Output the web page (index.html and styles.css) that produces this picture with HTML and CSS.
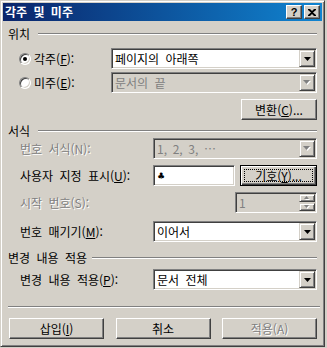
FILE: index.html
```html
<!DOCTYPE html>
<html lang="ko">
<head>
    <meta charset="UTF-8">
    <title>각주 및 미주</title>
    <link rel="stylesheet" href="styles.css">
</head>
<body>

    <div class="window">
        <!-- Title bar -->
        <div class="titlebar">
            <span class="title">각주 및 미주</span>
            <div class="caption-btns">
                <button class="cap-btn help">?</button>
                <button class="cap-btn close">
                    <svg width="8" height="7" viewBox="0 0 8 7"><path d="M0 0h2l2 2 2-2h2v1L5 3.5 8 6v1H6L4 5 2 7H0V6l3-2.5L0 1z" fill="#000"/></svg>
                </button>
            </div>
        </div>

        <div class="content">
            <!-- 위치 -->
            <div class="group"><span>위치</span></div>

            <div class="row radio-row first">
                <span class="radio on"></span>
                <span class="lbl">각주(<u>F</u>):</span>
                <div class="combo long">
                    <span class="val">페이지의 아래쪽</span>
                    <span class="drop"><svg width="7" height="4" viewBox="0 0 7 4"><path d="M0 0h7L3.5 4z" fill="#000"/></svg></span>
                </div>
            </div>

            <div class="row radio-row second">
                <span class="radio"></span>
                <span class="lbl">미주(<u>E</u>):</span>
                <div class="combo long disabled">
                    <span class="val">문서의 끝</span>
                    <span class="drop"><svg width="8" height="5" viewBox="0 0 8 5"><path d="M1 1h7L4.5 5z" fill="#fff"/><path d="M0 0h7L3.5 4z" fill="#808080"/></svg></span>
                </div>
            </div>

            <div class="row right-row">
                <button class="btn convert">변환(<u>C</u>)...</button>
            </div>

            <!-- 서식 -->
            <div class="group g2"><span>서식</span></div>

            <div class="row r-format">
                <span class="lbl dim">번호 서식(N):</span>
                <div class="combo short disabled">
                    <span class="val">1, 2, 3, …</span>
                    <span class="drop"><svg width="8" height="5" viewBox="0 0 8 5"><path d="M1 1h7L4.5 5z" fill="#fff"/><path d="M0 0h7L3.5 4z" fill="#808080"/></svg></span>
                </div>
            </div>

            <div class="row r-custom">
                <span class="lbl">사용자 지정 표시(<u>U</u>):</span>
                <div class="edit mark"><span class="club">♣</span></div>
                <button class="btn default symbol">기호(<u>Y</u>)...</button>
            </div>

            <div class="row r-start">
                <span class="lbl dim">시작 번호(S):</span>
                <div class="edit spin disabled">
                    <span class="val">1</span>
                    <span class="spin-btns">
                        <span class="spin-btn"><svg width="6" height="4" viewBox="0 0 6 4"><path d="M1 4h5L3.5 1.5z" fill="#fff"/><path d="M0 3h5L2.5 0z" fill="#808080"/></svg></span>
                        <span class="spin-btn"><svg width="6" height="4" viewBox="0 0 6 4"><path d="M1 1h5L3.5 4z" fill="#fff"/><path d="M0 0h5L2.5 3z" fill="#808080"/></svg></span>
                    </span>
                </div>
            </div>

            <div class="row r-numbering">
                <span class="lbl">번호 매기기(<u>M</u>):</span>
                <div class="combo short">
                    <span class="val">이어서</span>
                    <span class="drop"><svg width="7" height="4" viewBox="0 0 7 4"><path d="M0 0h7L3.5 4z" fill="#000"/></svg></span>
                </div>
            </div>

            <!-- 변경 내용 적용 -->
            <div class="group g3"><span>변경 내용 적용</span></div>

            <div class="row r-apply">
                <span class="lbl">변경 내용 적용(<u>P</u>):</span>
                <div class="combo short">
                    <span class="val">문서 전체</span>
                    <span class="drop"><svg width="7" height="4" viewBox="0 0 7 4"><path d="M0 0h7L3.5 4z" fill="#000"/></svg></span>
                </div>
            </div>

            <div class="separator"></div>

            <div class="actions">
                <button class="btn action">삽입(<u>I</u>)</button>
                <button class="btn action">취소</button>
                <button class="btn action off">적용(A)</button>
            </div>
        </div>
    </div>

</body>
</html>
```

FILE: styles.css
```css
body {
    margin: 0;
    background-color: #d4d0c8;
    font-family: "Noto Sans CJK KR", "Noto Sans", sans-serif;
    font-size: 12px;
    color: #000;
}

/* Window frame */
.window {
    width: 325px;
    height: 347px;
    box-sizing: border-box;
    padding: 2px;
    border: 1px solid;
    border-color: #d4d0c8 #404040 #404040 #d4d0c8;
    box-shadow: inset 1px 1px #fff, inset -1px -1px #808080;
    background-color: #d4d0c8;
    display: flex;
    flex-direction: column;
}

/* Title bar */
.titlebar {
    height: 18px;
    flex: none;
    display: flex;
    align-items: center;
    justify-content: space-between;
    padding: 0 2px 0 2px;
    background: linear-gradient(to right, #0a246a, #1084d0);
    color: #fff;
}

.title {
    font-weight: bold;
    word-spacing: 3px;
    line-height: 14px;
}

.caption-btns {
    display: flex;
    gap: 2px;
}

.cap-btn {
    width: 16px;
    height: 14px;
    box-sizing: border-box;
    padding: 0;
    border: 1px solid;
    border-color: #fff #404040 #404040 #fff;
    box-shadow: inset -1px -1px #808080, inset 1px 1px #d4d0c8;
    background-color: #d4d0c8;
    display: flex;
    align-items: center;
    justify-content: center;
    font-family: "Liberation Sans", sans-serif;
    font-weight: bold;
    font-size: 11px;
    line-height: 1;
    color: #000;
}

/* Content */
.content {
    flex: 1;
    padding: 0 5px 0 5px;
    display: flex;
    flex-direction: column;
    word-spacing: 3px;
}

.content > * {
    flex: none;
}

u {
    text-decoration: underline;
    text-underline-offset: 1px;
}

/* Group header: etched line behind the label */
.group {
    display: flex;
    align-items: center;
    height: 14px;
    margin-top: 6px;
    background:
        linear-gradient(#808080, #808080) 0 6px / 100% 1px no-repeat,
        linear-gradient(#fff, #fff) 0 7px / 100% 1px no-repeat;
}

.group span {
    white-space: nowrap;
    line-height: 14px;
    padding-right: 8px;
    background-color: #d4d0c8;
}

.group.g2 {
    margin-top: 4px;
}

.group.g3 {
    margin-top: 9px;
}

.group.g3 span {
    padding-right: 5px;
}

.row {
    display: flex;
    align-items: center;
    height: 21px;
    padding-left: 12px;
}

.row .lbl {
    flex: 1;
    white-space: nowrap;
}

.dim {
    color: #808080;
    text-shadow: 1px 1px #fff;
}

/* Radio rows */
.radio-row {
    padding-left: 11px;
}

.radio-row.first {
    margin-top: 7px;
}

.radio-row.second {
    margin-top: 3px;
}

.radio-row .lbl {
    margin-left: 3px;
}

.radio {
    width: 12px;
    height: 12px;
    box-sizing: border-box;
    border-radius: 50%;
    border: 1px solid;
    border-color: #808080 #fff #fff #808080;
    box-shadow: inset 1px 1px #404040, inset -1px -1px #d4d0c8;
    background-color: #fff;
    display: flex;
    align-items: center;
    justify-content: center;
}

.radio.on::after {
    content: "";
    width: 4px;
    height: 4px;
    border-radius: 50%;
    background-color: #000;
}

/* Sunken fields */
.combo,
.edit {
    box-sizing: border-box;
    height: 21px;
    padding: 1px;
    border: 1px solid;
    border-color: #808080 #fff #fff #808080;
    box-shadow: inset 1px 1px #404040, inset -1px -1px #d4d0c8;
    background-color: #fff;
    display: flex;
    align-items: center;
}

.combo.long {
    width: 206px;
}

.combo.short {
    width: 164px;
}

.combo .val,
.edit .val {
    flex: 1;
    padding-left: 2px;
    white-space: nowrap;
}

.disabled {
    background-color: #d4d0c8;
    color: #808080;
}

.drop,
.spin-btn {
    width: 16px;
    height: 17px;
    box-sizing: border-box;
    border: 1px solid;
    border-color: #d4d0c8 #404040 #404040 #d4d0c8;
    box-shadow: inset 1px 1px #fff, inset -1px -1px #808080;
    background-color: #d4d0c8;
    display: flex;
    align-items: center;
    justify-content: center;
}

.edit.mark {
    width: 82px;
    margin-right: 5px;
}

.club {
    font-family: "DejaVu Sans", sans-serif;
    font-size: 9px;
    padding-left: 2px;
}

.edit.spin {
    width: 82px;
}

.spin-btns {
    display: flex;
    flex-direction: column;
}

.spin-btn {
    height: 8px;
    width: 16px;
}

.spin-btn + .spin-btn {
    margin-top: 1px;
}

/* Buttons */
.btn {
    box-sizing: border-box;
    height: 21px;
    padding: 0;
    border: 1px solid;
    border-color: #fff #404040 #404040 #fff;
    box-shadow: inset -1px -1px #808080, inset 1px 1px #d4d0c8;
    background-color: #d4d0c8;
    font: inherit;
    color: #000;
    word-spacing: 3px;
}

.btn.off {
    color: #808080;
    text-shadow: 1px 1px #fff;
}

.btn.default {
    border-color: #000;
    box-shadow: inset 1px 1px #fff, inset -1px -1px #404040, inset -2px -2px #808080;
    outline: 1px dotted #000;
    outline-offset: -5px;
}

.right-row {
    justify-content: flex-end;
    margin-top: 6px;
}

.convert {
    width: 76px;
}

.symbol {
    width: 77px;
}

.r-format {
    margin-top: 0;
}

.r-custom {
    margin-top: 6px;
}

.r-start {
    margin-top: 6px;
}

.r-numbering {
    margin-top: 8px;
}

.r-apply {
    margin-top: 4px;
}

.separator {
    margin: 16px -3px 0 0;
    border-top: 1px solid #808080;
    border-bottom: 1px solid #fff;
}

.actions {
    display: flex;
    justify-content: space-between;
    margin-top: 10px;
    padding-left: 1px;
}

.action {
    width: 95px;
}
```
